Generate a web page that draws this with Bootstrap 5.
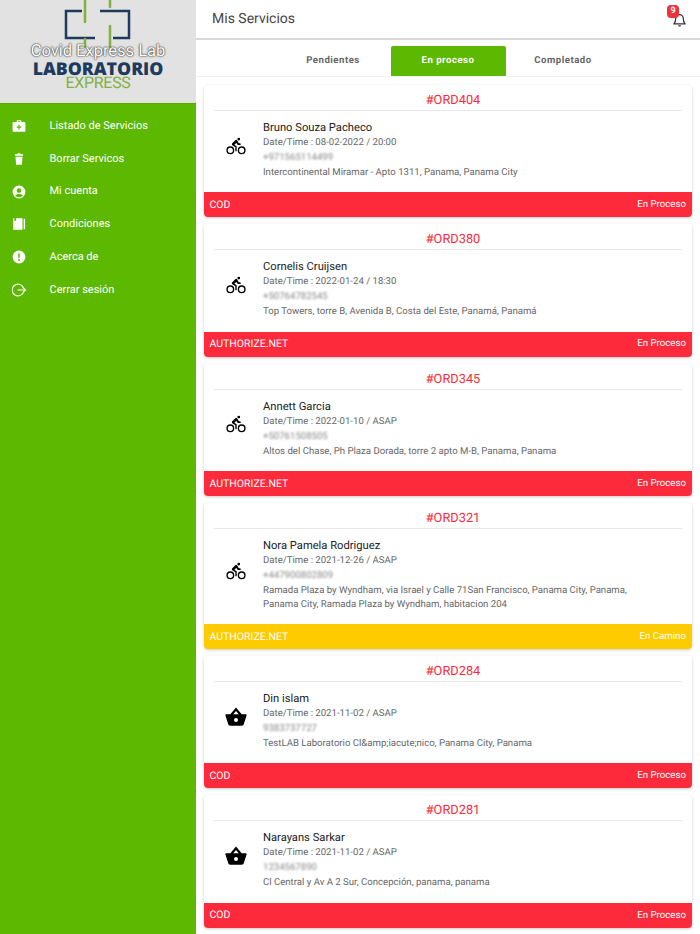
<!DOCTYPE html>
<html lang="es">
<head>
    <meta charset="UTF-8">
    <meta name="viewport" content="width=device-width, initial-scale=1.0">
    <title>Mis Servicios</title>
    <link href="https://cdn.jsdelivr.net/npm/bootstrap@5.3.0/dist/css/bootstrap.min.css" rel="stylesheet">
    <style>
        html, body {
            height: 100%;
            overflow: hidden;
        }
        body {
            font-family: Roboto, "Liberation Sans", sans-serif;
            background-color: #fff;
            text-rendering: geometricPrecision;
        }
        .side-menu {
            width: 196px;
            background-color: #5cb800;
        }
        .logo-box {
            height: 104px;
            background-color: #e2e2e2;
            position: relative;
            overflow: hidden;
            border-bottom: 1px solid #56ac00;
        }
        .logo-cross {
            position: absolute;
            left: 64px;
            top: 0;
        }
        .logo-over {
            position: absolute;
            left: 0;
            right: 0;
            top: 43px;
            font-size: 16.500px;
            line-height: 18px;
            color: #fff;
            text-shadow: 0 0 1px #222, 0 0 2px #222;
        }
        .logo-main {
            position: absolute;
            left: 0;
            right: 0;
            top: 61px;
            font-family: "Open Sans", sans-serif;
            font-size: 17.700px;
            line-height: 16px;
            font-weight: 800;
            color: #1d3b5e;
        }
        .logo-sub {
            position: absolute;
            left: 0;
            right: 0;
            top: 77px;
            font-size: 16px;
            line-height: 12px;
            color: #82b13f;
            letter-spacing: -.3px;
        }
        .menu-row {
            height: 32.800px;
            color: #fff;
            font-size: 11px;
            text-decoration: none;
            padding-left: 12px;
            gap: 23.500px;
        }
        .menu-row:hover {
            color: #fff;
        }
        .menu-row svg {
            width: 14px;
            height: 14px;
        }
        .menu-list {
            padding-top: 5.700px;
        }
        .main-area {
            width: 504px;
        }
        .top-title {
            height: 40px;
            padding-left: 16px;
            padding-top: 1px;
            font-size: 14px;
            color: #444;
            border-bottom: 2px solid #d9d9d9;
        }
        .bell-wrap {
            position: absolute;
            right: 13px;
            top: 12px;
            line-height: 0;
        }
        .bell-count {
            position: absolute;
            left: -5px;
            top: -7px;
            width: 12px;
            height: 13px;
            border-radius: 4px;
            background-color: #f0323c;
            color: #fff;
            font-size: 9px;
            line-height: 13px;
            font-weight: 700;
            text-align: center;
        }
        .tab-strip {
            height: 37px;
            padding-top: 6px;
            border-bottom: 1px solid #f1f1f1;
        }
        .tab-item {
            width: 115px;
            font-size: 9.600px;
            font-weight: 700;
            letter-spacing: .5px;
            color: #666;
            text-decoration: none;
        }
        .tab-item.on {
            background-color: #5cb800;
            color: #fff;
            border-radius: 2px 2px 0 0;
        }
        .order-list {
            padding: 8px 8px 0;
        }
        .order-box {
            border: 0;
            border-radius: 4px;
            box-shadow: 0 1px 3px rgba(0, 0, 0, .22);
            margin-bottom: 7px;
            overflow: hidden;
        }
        .order-no {
            margin: 0 10px;
            padding-left: 10px;
            height: 26px;
            font-size: 12.800px;
            line-height: 31px;
            color: #fd2a3b;
            text-align: center;
            border-bottom: 1px solid #e8e8e8;
        }
        .order-body {
            padding: 9px 10px 12.300px;
        }
        .order-icon {
            width: 49px;
            padding: 0 6px 10px 0;
            flex: none;
        }
        .order-text {
            padding-right: 24px;
        }
        .order-name {
            font-size: 11.200px;
            line-height: 15px;
            color: #222;
        }
        .order-line {
            margin-top: 1px;
            font-size: 9.600px;
            line-height: 14px;
            color: #666;
        }
        .order-phone {
            filter: blur(1.1px);
            color: #888;
        }
        .order-foot {
            height: 25px;
            padding: 0 6px 0 5.500px;
            font-size: 10.500px;
            color: #fff;
            background-color: #fd2a3b;
        }
        .foot-state {
            font-size: 9.700px;
            padding-top: 1px;
        }
        .order-foot.moving {
            background-color: #fdcb00;
        }
    </style>
</head>
<body>
<svg width="0" height="0" class="position-absolute">
    <symbol id="i-bike" viewBox="0 0 512 512">
        <path d="M388 448a92 92 0 1192-92 92.1 92.1 0 01-92 92zm0-152a60 60 0 1060 60 60.07 60.07 0 00-60-60zM124 448a92 92 0 1192-92 92.1 92.1 0 01-92 92zm0-152a60 60 0 1060 60 60.07 60.07 0 00-60-60zM320 128a31.89 31.89 0 0032-32.1A31.55 31.55 0 00320.2 64a32 32 0 10-.2 64z"/>
        <path d="M367.55 192h-43.76a4 4 0 01-3.51-2.08l-31.74-58.17a31 31 0 00-49.38-7.75l-69.86 70.4a32.56 32.56 0 00-9.3 22.4c0 17.4 12.6 23.6 18.5 27.1 28.5 16.42 48.57 28.43 59.58 35.1a4 4 0 011.92 3.41V364a16 16 0 0032 0V268.5a16 16 0 00-7.6-13.6l-40.4-25a4 4 0 01-.8-6.3l37-36.9a4 4 0 016.3.9l16 29.4a32 32 0 0028 16.9h42.7a16 16 0 000-32z"/>
    </symbol>
    <symbol id="i-basket" viewBox="0 0 24 24">
        <path fill="none" stroke="#000" stroke-width="2.500" d="M6.500 10 12 3.500 17.500 10"/>
        <path fill-rule="evenodd" d="M1.500 9h21a1 1 0 0 1 1 1.300L20.500 20a2.200 2.200 0 0 1-2 1.500h-13a2.200 2.200 0 0 1-2-1.500L.500 10.300a1 1 0 0 1 1-1.300zm10.500 4a2.200 2.200 0 1 0 0 4.400 2.200 2.200 0 0 0 0-4.400z"/>
    </symbol>
</svg>
<div class="d-flex h-100">
    <div class="side-menu flex-shrink-0">
        <div class="logo-box text-center">
            <svg class="logo-cross" width="68" height="58" viewBox="0 0 68 58" fill="none">
                <path d="M18 11H2v27h29M36 11h29v27H49" stroke="#1d3b5e" stroke-width="2.500"/>
                <path d="M21 0v22M46 0v7M46 26v21M21 39v8" stroke="#82b13f" stroke-width="2.500" stroke-linecap="round"/>
            </svg>
            <div class="logo-main">LABORATORIO</div>
            <div class="logo-sub">EXPRESS</div>
            <div class="logo-over">Covid Express Lab</div>
        </div>
        <nav class="menu-list">
            <a href="#" class="menu-row d-flex align-items-center">
                <svg viewBox="0 0 24 24" fill="#fff"><path fill-rule="evenodd" d="M8 5V3.500A1.500 1.500 0 0 1 9.500 2h5A1.500 1.500 0 0 1 16 3.500V5h5a2 2 0 0 1 2 2v13a2 2 0 0 1-2 2H3a2 2 0 0 1-2-2V7a2 2 0 0 1 2-2zm2-1v1h4V4zm1 6v3H8v2h3v3h2v-3h3v-2h-3v-3z"/></svg>
                <span>Listado de Servicios</span>
            </a>
            <a href="#" class="menu-row d-flex align-items-center">
                <svg viewBox="0 0 24 24" fill="#fff"><path d="M5 4h4l1-2h4l1 2h4v2.500H5zM6 8h12l-1 14H7z"/></svg>
                <span>Borrar Servicos</span>
            </a>
            <a href="#" class="menu-row d-flex align-items-center">
                <svg viewBox="0 0 24 24" fill="#fff"><path fill-rule="evenodd" d="M12 1a11 11 0 1 1 0 22 11 11 0 0 1 0-22zm0 4.500a4 4 0 1 0 0 8 4 4 0 0 0 0-8zM5.500 18.500C7 20.300 9.400 21 12 21s5-.7 6.500-2.500C17.500 16.500 15 15.500 12 15.500s-5.500 1-6.500 3z"/></svg>
                <span>Mi cuenta</span>
            </a>
            <a href="#" class="menu-row d-flex align-items-center">
                <svg viewBox="0 0 24 24" fill="#fff"><path fill-rule="evenodd" d="M2 2h16v20H2zm2 0v5l1.500-1L7 7V2z"/><path d="M20 3h2.500v18H20z"/></svg>
                <span>Condiciones</span>
            </a>
            <a href="#" class="menu-row d-flex align-items-center">
                <svg viewBox="0 0 24 24" fill="#fff"><path fill-rule="evenodd" d="M12 1a11 11 0 1 1 0 22 11 11 0 0 1 0-22zm-1.500 5 .5 8h2l.5-8zM12 15.500a1.700 1.700 0 1 0 0 3.400 1.700 1.700 0 0 0 0-3.400z"/></svg>
                <span>Acerca de</span>
            </a>
            <a href="#" class="menu-row d-flex align-items-center">
                <svg viewBox="0 0 24 24" fill="none" stroke="#fff" stroke-width="2" stroke-linecap="round" stroke-linejoin="round"><path d="M19 7a10 10 0 1 0 0 10M10 12h13M19 8l4 4-4 4"/></svg>
                <span>Cerrar sesión</span>
            </a>
        </nav>
    </div>
    <div class="main-area flex-grow-1 d-flex flex-column">
        <div class="top-title flex-shrink-0 d-flex align-items-center position-relative">
            <span>Mis Servicios</span>
            <div class="bell-wrap">
                <svg width="15" height="15" viewBox="0 0 24 24" fill="none" stroke="#333" stroke-width="2" stroke-linejoin="round"><path d="M3 19c2-2 3-4 3-9a6 6 0 0 1 12 0c0 5 1 7 3 9zM10 22h4"/></svg>
                <span class="bell-count">9</span>
            </div>
        </div>
        <div class="tab-strip flex-shrink-0 d-flex justify-content-center align-items-stretch">
            <a href="#" class="tab-item d-flex align-items-center justify-content-center">Pendientes</a>
            <a href="#" class="tab-item on d-flex align-items-center justify-content-center">En proceso</a>
            <a href="#" class="tab-item d-flex align-items-center justify-content-center">Completado</a>
        </div>
        <div class="order-list flex-shrink-0">
            <div class="card order-box">
                <div class="order-no">#ORD404</div>
                <div class="order-body d-flex align-items-center">
                    <div class="order-icon text-center"><svg width="22" height="22"><use href="#i-bike"/></svg></div>
                    <div class="order-text">
                        <div class="order-name">Bruno Souza Pacheco</div>
                        <div class="order-line">Date/Time : 08-02-2022 / 20:00</div>
                        <div class="order-line order-phone">+971565114499</div>
                        <div class="order-line">Intercontinental Miramar - Apto 1311, Panama, Panama City</div>
                    </div>
                </div>
                <div class="order-foot d-flex justify-content-between align-items-center"><span>COD</span><span class="foot-state">En Proceso</span></div>
            </div>
            <div class="card order-box">
                <div class="order-no">#ORD380</div>
                <div class="order-body d-flex align-items-center">
                    <div class="order-icon text-center"><svg width="22" height="22"><use href="#i-bike"/></svg></div>
                    <div class="order-text">
                        <div class="order-name">Cornelis Cruijsen</div>
                        <div class="order-line">Date/Time : 2022-01-24 / 18:30</div>
                        <div class="order-line order-phone">+50764782545</div>
                        <div class="order-line">Top Towers, torre B, Avenida B, Costa del Este, Panamá, Panamá</div>
                    </div>
                </div>
                <div class="order-foot d-flex justify-content-between align-items-center"><span>AUTHORIZE.NET</span><span class="foot-state">En Proceso</span></div>
            </div>
            <div class="card order-box">
                <div class="order-no">#ORD345</div>
                <div class="order-body d-flex align-items-center">
                    <div class="order-icon text-center"><svg width="22" height="22"><use href="#i-bike"/></svg></div>
                    <div class="order-text">
                        <div class="order-name">Annett Garcia</div>
                        <div class="order-line">Date/Time : 2022-01-10 / ASAP</div>
                        <div class="order-line order-phone">+50761508505</div>
                        <div class="order-line">Altos del Chase, Ph Plaza Dorada, torre 2 apto M-B, Panama, Panama</div>
                    </div>
                </div>
                <div class="order-foot d-flex justify-content-between align-items-center"><span>AUTHORIZE.NET</span><span class="foot-state">En Proceso</span></div>
            </div>
            <div class="card order-box">
                <div class="order-no">#ORD321</div>
                <div class="order-body d-flex align-items-center">
                    <div class="order-icon text-center"><svg width="22" height="22"><use href="#i-bike"/></svg></div>
                    <div class="order-text">
                        <div class="order-name">Nora Pamela Rodriguez</div>
                        <div class="order-line">Date/Time : 2021-12-26 / ASAP</div>
                        <div class="order-line order-phone">+447900802809</div>
                        <div class="order-line">Ramada Plaza by Wyndham, via Israel y Calle 71San Francisco, Panama City, Panama, Panama City, Ramada Plaza by Wyndham, habitacion 204</div>
                    </div>
                </div>
                <div class="order-foot moving d-flex justify-content-between align-items-center"><span>AUTHORIZE.NET</span><span class="foot-state">En Camino</span></div>
            </div>
            <div class="card order-box">
                <div class="order-no">#ORD284</div>
                <div class="order-body d-flex align-items-center">
                    <div class="order-icon text-center"><svg width="22" height="22"><use href="#i-basket"/></svg></div>
                    <div class="order-text">
                        <div class="order-name">Din islam</div>
                        <div class="order-line">Date/Time : 2021-11-02 / ASAP</div>
                        <div class="order-line order-phone">9383737727</div>
                        <div class="order-line">TestLAB Laboratorio Cl&amp;amp;iacute;nico, Panama City, Panama</div>
                    </div>
                </div>
                <div class="order-foot d-flex justify-content-between align-items-center"><span>COD</span><span class="foot-state">En Proceso</span></div>
            </div>
            <div class="card order-box">
                <div class="order-no">#ORD281</div>
                <div class="order-body d-flex align-items-center">
                    <div class="order-icon text-center"><svg width="22" height="22"><use href="#i-basket"/></svg></div>
                    <div class="order-text">
                        <div class="order-name">Narayans Sarkar</div>
                        <div class="order-line">Date/Time : 2021-11-02 / ASAP</div>
                        <div class="order-line order-phone">1234567890</div>
                        <div class="order-line">Cl Central y Av A 2 Sur, Concepción, panama, panama</div>
                    </div>
                </div>
                <div class="order-foot d-flex justify-content-between align-items-center"><span>COD</span><span class="foot-state">En Proceso</span></div>
            </div>
        </div>
    </div>
</div>
<script src="https://cdn.jsdelivr.net/npm/bootstrap@5.3.0/dist/js/bootstrap.bundle.min.js"></script>
</body>
</html>
